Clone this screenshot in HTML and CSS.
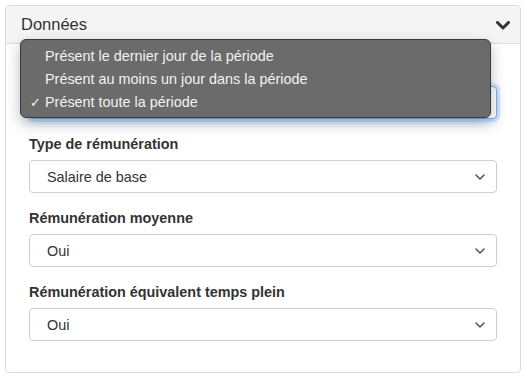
FILE: index.html
```html
<!DOCTYPE html>
<html lang="fr">
<head>
<meta charset="utf-8">
<title>Données</title>
<link rel="stylesheet" href="styles.css">
</head>
<body>
<div class="card">
  <div class="card-header">
    <span class="card-title">Données</span>
    <svg class="header-chevron" width="14" height="9" viewBox="0 0 14 9"><path d="M1.5 1.5 L7 7 L12.5 1.5" fill="none" stroke="#333" stroke-width="3" stroke-linecap="round" stroke-linejoin="round"/></svg>
  </div>
  <div class="card-body">
    <div class="form-group">
      <div class="label"></div>
      <div class="select focused"><span></span>
        <svg class="sel-chevron" width="10" height="6" viewBox="0 0 10 6"><path d="M1 1 L5 5 L9 1" fill="none" stroke="#555" stroke-width="1.6" stroke-linecap="round" stroke-linejoin="round"/></svg>
      </div>
    </div>
    <div class="form-group">
      <div class="label">Type de rémunération</div>
      <div class="select"><span>Salaire de base</span>
        <svg class="sel-chevron" width="10" height="6" viewBox="0 0 10 6"><path d="M1 1 L5 5 L9 1" fill="none" stroke="#555" stroke-width="1.6" stroke-linecap="round" stroke-linejoin="round"/></svg>
      </div>
    </div>
    <div class="form-group">
      <div class="label">Rémunération moyenne</div>
      <div class="select"><span>Oui</span>
        <svg class="sel-chevron" width="10" height="6" viewBox="0 0 10 6"><path d="M1 1 L5 5 L9 1" fill="none" stroke="#555" stroke-width="1.6" stroke-linecap="round" stroke-linejoin="round"/></svg>
      </div>
    </div>
    <div class="form-group">
      <div class="label">Rémunération équivalent temps plein</div>
      <div class="select"><span>Oui</span>
        <svg class="sel-chevron" width="10" height="6" viewBox="0 0 10 6"><path d="M1 1 L5 5 L9 1" fill="none" stroke="#555" stroke-width="1.6" stroke-linecap="round" stroke-linejoin="round"/></svg>
      </div>
    </div>
    <div class="menu">
      <div class="menu-item"><span class="check"></span>Présent le dernier jour de la période</div>
      <div class="menu-item"><span class="check"></span>Présent au moins un jour dans la période</div>
      <div class="menu-item"><span class="check">✓</span>Présent toute la période</div>
    </div>
  </div>
</div>
</body>
</html>
```
FILE: styles.css
```css
* { box-sizing: border-box; }
html, body {
  margin: 0;
  padding: 0;
  background: #fff;
}
body {
  font-family: "Helvetica Neue", Helvetica, "Liberation Sans", Arial, sans-serif;
  color: #333;
  padding: 5px 6px 0 5px;
}
.card {
  width: 516px;
  border: 1px solid #dcdcdc;
  border-radius: 4px;
  background: #fff;
}
.card-header {
  height: 38px;
  background: #f5f5f5;
  border-bottom: 1px solid #dcdcdc;
  border-radius: 3px 3px 0 0;
  display: flex;
  align-items: center;
  justify-content: space-between;
  padding: 0 10px 0 15px;
}
.card-title {
  font-size: 16.5px;
  color: #333;
}
.header-chevron { display: block; margin-top: 1px; }
.card-body {
  position: relative;
  padding: 16px 23px 16px 23px;
}
.form-group {
  margin-bottom: 15px;
}
.label {
  font-size: 14.4px;
  font-weight: bold;
  height: 21px;
  line-height: 21px;
  margin-bottom: 5px;
  color: #333;
}
.select {
  height: 33px;
  border: 1px solid #cfcfcf;
  border-radius: 4px;
  display: flex;
  align-items: center;
  justify-content: space-between;
  padding: 0 11px 0 17px;
  font-size: 14.4px;
  color: #333;
  background: #fff;
}
.select.focused {
  border-color: #7fb1e6;
  box-shadow: 0 0 0 3px rgba(120, 170, 230, 0.25), 0 2px 10px rgba(80, 130, 200, 0.3);
}
.sel-chevron { display: block; }
.menu {
  position: absolute;
  left: 14px;
  top: -5px;
  width: 471px;
  height: 79px;
  background: #6b6b6b;
  border: 1px solid #3a3a3a;
  border-radius: 6px;
  padding: 5px 0 0 0;
  box-shadow: 0 5px 14px rgba(40, 60, 90, 0.35);
  color: #f2f2f2;
  font-size: 14.4px;
}
.menu-item {
  height: 23px;
  line-height: 23px;
  display: flex;
  align-items: center;
}
.check {
  width: 24px;
  padding-left: 9px;
  font-size: 13px;
  color: #f2f2f2;
}
```
